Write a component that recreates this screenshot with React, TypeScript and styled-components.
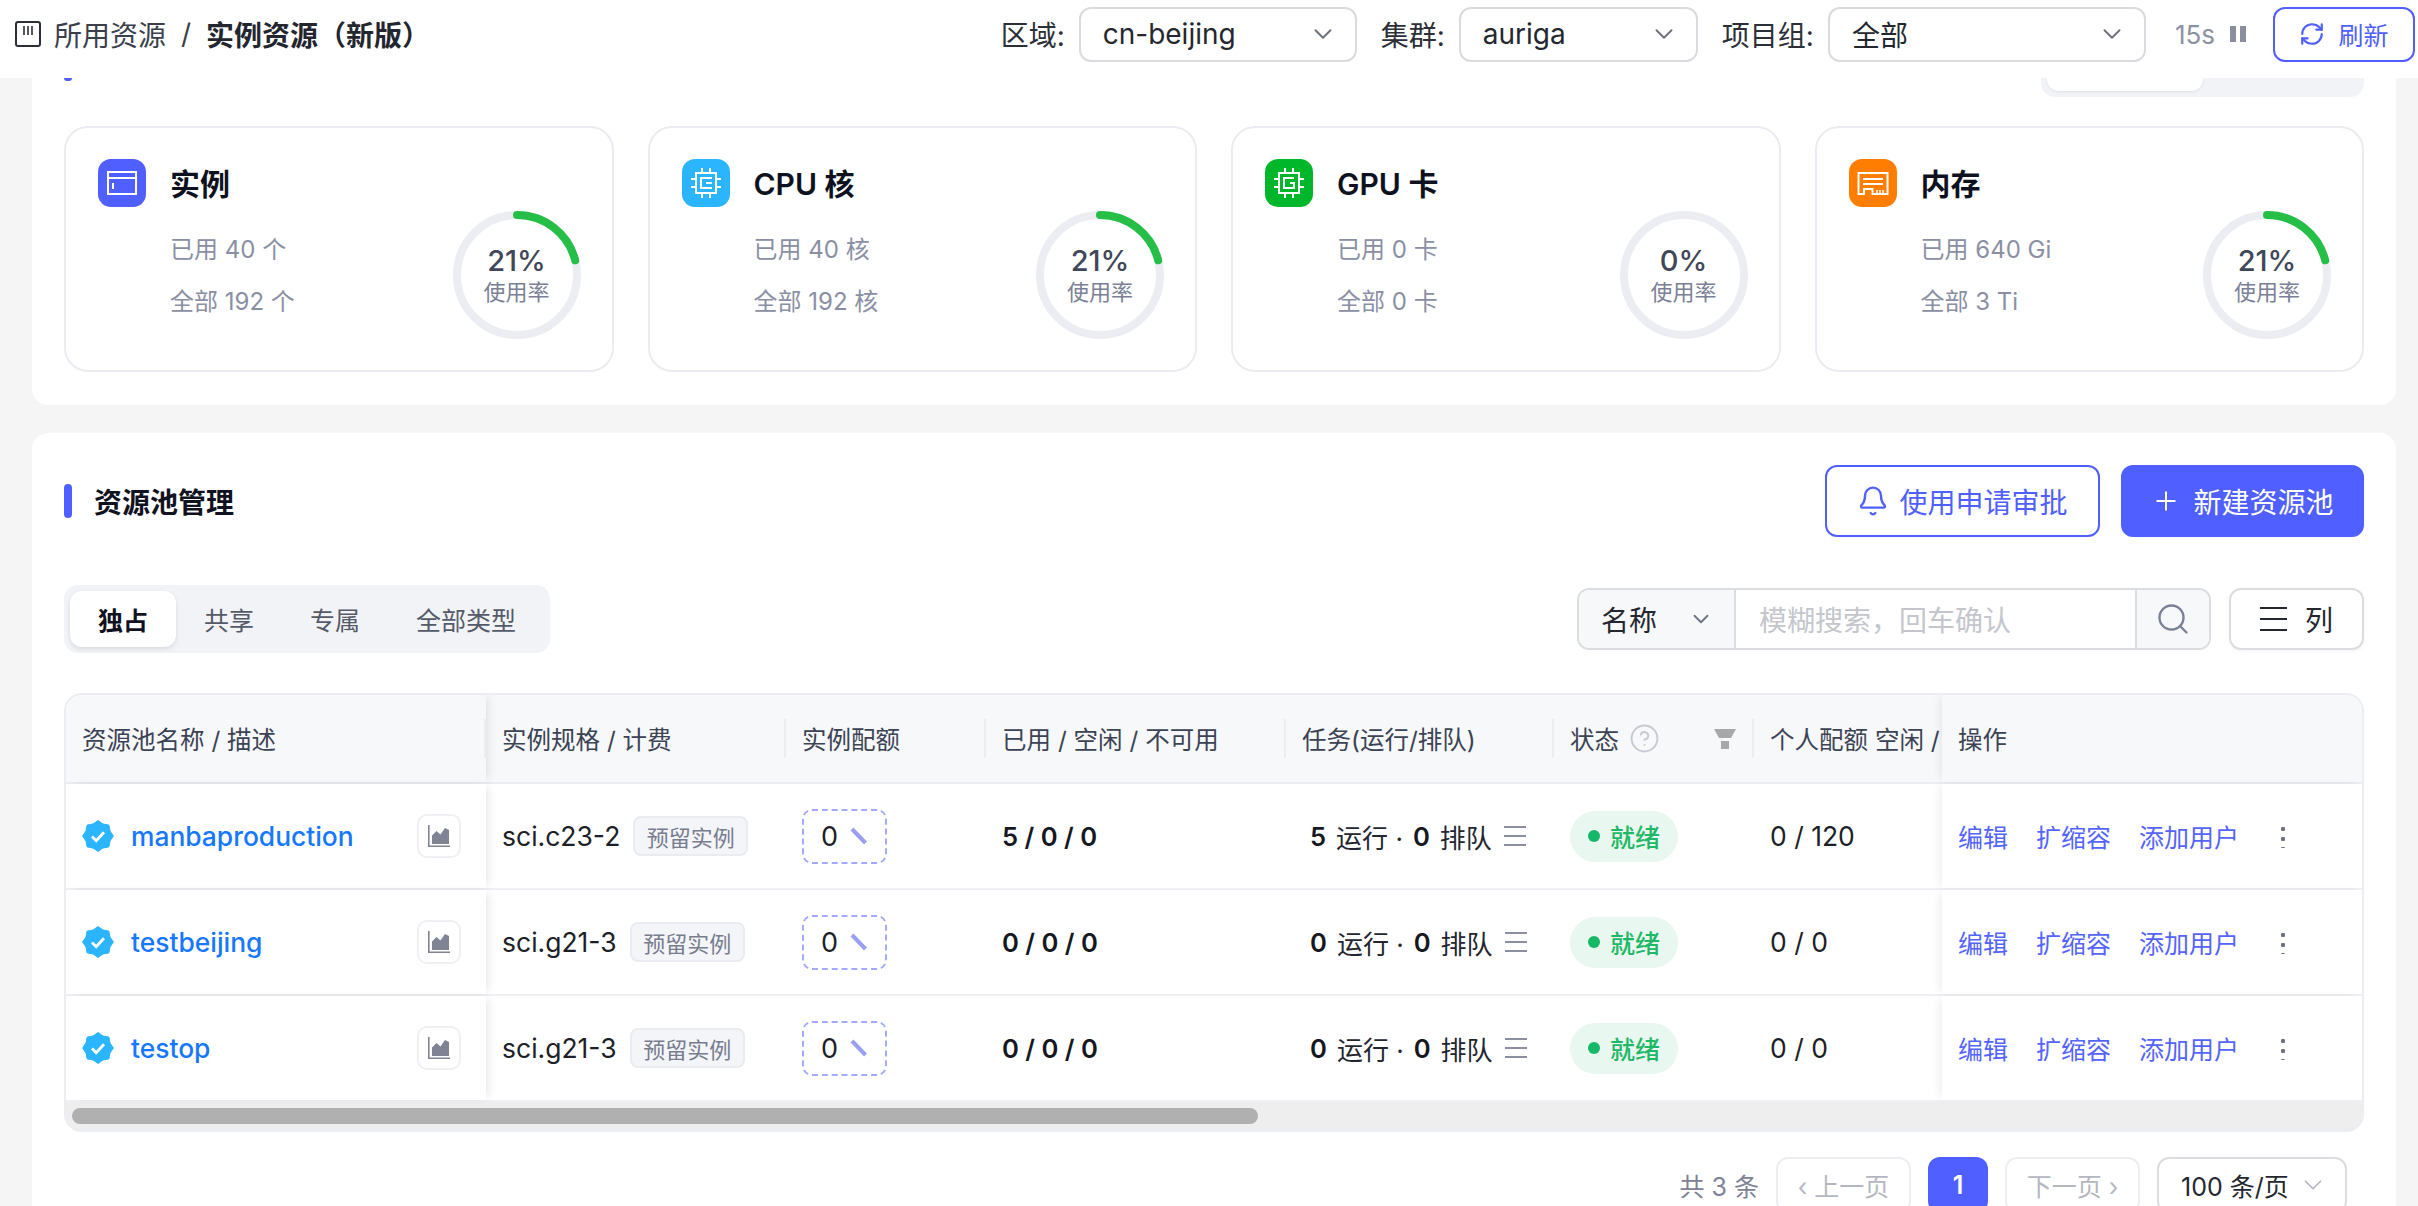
import React from 'react';
import styled, { createGlobalStyle } from 'styled-components';
import { Bell, ChevronDown, CircleHelp, Plus, RefreshCw, Search } from 'lucide-react';

const BLUE = '#505fff';
const FONT = 'Inter, "Noto Sans CJK SC", sans-serif';

const GlobalStyle = createGlobalStyle`
  html, body {
    margin: 0;
    padding: 0;
    height: 100%;
    overflow: hidden;
    background: #f5f5f5;
    font-family: ${FONT};
  }
  * { box-sizing: border-box; }
`;

const Shell = styled.div`
  height: 1206px;
  overflow: hidden;
  display: flex;
  flex-direction: column;
`;

const TopBar = styled.header`
  height: 78px;
  flex: none;
  display: flex;
  align-items: center;
  padding: 0 3px 10px 15px;
  background: #fff;
`;

const Crumbs = styled.div`
  display: flex;
  align-items: center;
  font-size: 28px;
  color: #3b3f4c;
`;

const CrumbText = styled.span`
  margin-left: 13px;
`;

const Slash = styled.span`
  margin: 0 15px;
`;

const CrumbCurrent = styled.span`
  font-weight: 600;
  color: #23262f;
`;

const Filters = styled.div`
  margin-left: auto;
  display: flex;
  align-items: center;
`;

const FilterLabel = styled.span`
  font-size: 28px;
  color: #2c2f38;
  margin-right: 14px;
`;

const SelectBox = styled.div<{ $width: number }>`
  width: ${(p) => p.$width}px;
  height: 55px;
  margin-right: 24px;
  padding: 0 17px 0 22px;
  display: flex;
  align-items: center;
  justify-content: space-between;
  border: 2px solid #dadbde;
  border-radius: 12px;
  font-size: 28px;
  color: #25272e;
  svg { color: #6e7383; }
`;

const Timer = styled.span`
  font-size: 26px;
  color: #8d92a3;
  margin-left: 5px;
`;

const PauseMark = styled.span`
  width: 16px;
  height: 16px;
  margin: 0 27px 0 15px;
  display: flex;
  justify-content: space-between;
  &::before, &::after {
    content: '';
    width: 6px;
    background: #8a8fa0;
  }
`;

const RefreshButton = styled.button`
  width: 142px;
  height: 55px;
  display: flex;
  align-items: center;
  justify-content: center;
  gap: 13px;
  background: #fff;
  border: 2px solid ${BLUE};
  border-radius: 12px;
  color: ${BLUE};
  font: 400 25px ${FONT};
  padding: 0;
`;

const Content = styled.main`
  flex: 1;
  padding: 0 22px 0 32px;
  display: flex;
  flex-direction: column;
  gap: 28px;
`;

const Panel = styled.section`
  background: #fff;
  padding: 0 32px 33px;
  border-radius: 0 0 16px 16px;
`;

const ToolPanel = styled(Panel)`
  padding-top: 32px;
  flex: 1;
  border-radius: 16px 16px 0 0;
`;

const ClippedHead = styled.div`
  height: 19px;
  margin-bottom: 29px;
  display: flex;
  justify-content: space-between;
  align-items: flex-start;
`;

const ClippedAccent = styled.span`
  width: 8px;
  height: 3px;
  background: ${BLUE};
  border-radius: 0 0 4px 4px;
`;

const ClippedSegment = styled.div`
  width: 323px;
  height: 19px;
  padding: 0 6px;
  background: #f2f3f7;
  border-radius: 0 0 14px 14px;
`;

const ClippedTab = styled.div`
  width: 156px;
  height: 13px;
  background: #fff;
  border-radius: 0 0 12px 12px;
  box-shadow: 0 1px 3px rgba(0, 0, 0, 0.08);
`;

const CardGrid = styled.div`
  display: grid;
  grid-template-columns: repeat(4, 1fr);
  gap: 34px;
`;

const Card = styled.article`
  height: 246px;
  padding: 31px 31px 31px 32px;
  border: 2px solid #ebecf2;
  border-radius: 24px;
  display: flex;
  justify-content: space-between;
`;

const CardTitleRow = styled.div`
  display: flex;
  align-items: center;
  gap: 24px;
`;

const IconTile = styled.span<{ $color: string }>`
  width: 48px;
  height: 48px;
  border-radius: 13px;
  background: ${(p) => p.$color};
  display: block;
  svg { display: block; }
`;

const CardTitle = styled.h3`
  margin: -2px 0 0;
  font-size: 30px;
  font-weight: 600;
  color: #0e1220;
`;

const Stats = styled.div`
  margin: 17px 0 0 72px;
  font-size: 24px;
  line-height: 52px;
  color: #8a8fa3;
  white-space: nowrap;
`;

const RingBox = styled.div`
  position: relative;
  width: 128px;
  height: 128px;
  align-self: flex-end;
  flex: none;
`;

const RingLabel = styled.div`
  position: absolute;
  inset: 0;
  display: flex;
  flex-direction: column;
  align-items: center;
  justify-content: center;
`;

const RingValue = styled.span`
  font-size: 29px;
  line-height: 34px;
  font-weight: 500;
  color: #3f4759;
`;

const RingCaption = styled.span`
  font-size: 22px;
  line-height: 28px;
  color: #7a8095;
`;

const SectionHead = styled.div`
  height: 72px;
  display: flex;
  align-items: center;
`;

const Accent = styled.span`
  width: 8px;
  height: 34px;
  margin-right: 22px;
  border-radius: 4px;
  background: ${BLUE};
`;

const SectionTitle = styled.h2`
  margin: 0;
  font-size: 28px;
  font-weight: 600;
  color: #10131f;
`;

const HeadActions = styled.div`
  margin-left: auto;
  display: flex;
  gap: 21px;
`;

const ActionButton = styled.button<{ $primary?: boolean }>`
  height: 72px;
  display: flex;
  align-items: center;
  justify-content: center;
  gap: ${(p) => (p.$primary ? 12 : 10)}px;
  padding: 0;
  width: ${(p) => (p.$primary ? 243 : 275)}px;
  border: 2px solid ${BLUE};
  border-radius: 12px;
  background: ${(p) => (p.$primary ? BLUE : '#fff')};
  color: ${(p) => (p.$primary ? '#fff' : BLUE)};
  font: 400 28px ${FONT};
`;

const Toolbar = styled.div`
  margin-top: 48px;
  display: flex;
  align-items: center;
  justify-content: space-between;
  height: 68px;
`;

const Segment = styled.div`
  height: 68px;
  padding: 6px;
  display: flex;
  background: #f2f3f7;
  border-radius: 14px;
`;

const SegmentTab = styled.span<{ $active?: boolean }>`
  height: 56px;
  padding: 0 28px;
  display: flex;
  align-items: center;
  font-size: 25px;
  border-radius: 12px;
  font-weight: ${(p) => (p.$active ? 600 : 400)};
  color: ${(p) => (p.$active ? '#10131f' : '#555a68')};
  background: ${(p) => (p.$active ? '#fff' : 'transparent')};
  box-shadow: ${(p) => (p.$active ? '0 2px 5px rgba(0, 0, 0, 0.1)' : 'none')};
`;

const ToolbarRight = styled.div`
  display: flex;
  gap: 18px;
`;

const SearchGroup = styled.div`
  width: 634px;
  height: 62px;
  display: flex;
  border: 2px solid #dcdde1;
  border-radius: 12px;
  overflow: hidden;
`;

const FieldPicker = styled.div`
  width: 157px;
  display: flex;
  align-items: center;
  justify-content: space-between;
  padding: 0 20px 0 22px;
  background: #f7f8fa;
  border-right: 2px solid #dcdde1;
  font-size: 28px;
  color: #25272e;
  svg { color: #6e7383; }
`;

const SearchInput = styled.div`
  flex: 1;
  padding-left: 23px;
  display: flex;
  align-items: center;
  font-size: 28px;
  color: #c4c6cc;
`;

const SearchAction = styled.div`
  width: 74px;
  display: flex;
  align-items: center;
  justify-content: center;
  background: #f7f8fa;
  border-left: 2px solid #dcdde1;
  color: #7a8095;
`;

const ColumnsButton = styled.button`
  width: 135px;
  height: 62px;
  display: flex;
  align-items: center;
  justify-content: center;
  gap: 18px;
  padding: 0;
  background: #fff;
  border: 2px solid #dcdde1;
  border-radius: 12px;
  box-shadow: 0 2px 4px rgba(0, 0, 0, 0.04);
  color: #25272e;
  font: 400 28px ${FONT};
`;

const LinesMark = styled.span<{ $width: number; $color: string; $gap: number }>`
  width: ${(p) => p.$width}px;
  height: ${(p) => p.$gap * 2 + 6}px;
  flex: none;
  display: block;
  background: repeating-linear-gradient(
    to bottom,
    ${(p) => p.$color} 0 2px,
    transparent 2px ${(p) => p.$gap + 2}px
  );
`;

const TableWrap = styled.div`
  margin-top: 40px;
  border: solid #ecedf2;
  border-width: 2px 2px 4px;
  border-radius: 18px;
  overflow: hidden;
`;

const rowColumns = '420px 300px 200px 300px 268px 200px 188px 1fr';

const HeadRow = styled.div`
  height: 89px;
  display: grid;
  grid-template-columns: ${rowColumns};
  background: #f7f8fa;
  border-bottom: 2px solid #ecedf2;
`;

const HeadCell = styled.div<{ $last?: boolean }>`
  position: relative;
  display: flex;
  align-items: center;
  padding-left: 16px;
  font-size: 24.5px;
  color: #3c4354;
  white-space: nowrap;
  overflow: hidden;
  background: #f7f8fa;
  &::after {
    content: '';
    display: ${(p) => (p.$last ? 'none' : 'block')};
    position: absolute;
    right: 0;
    top: 24px;
    width: 2px;
    height: 39px;
    background: #ecedf0;
  }
`;

const FilterMark = styled.svg`
  margin: 0 18px 0 auto;
  flex: none;
`;

const HelpMark = styled(CircleHelp)`
  margin-left: 10px;
  color: #c8cad2;
  flex: none;
`;

const PinnedLeftHead = styled(HeadCell)`
  z-index: 1;
  box-shadow: 5px 0 9px -3px rgba(0, 0, 0, 0.1);
`;

const PinnedRightHead = styled(HeadCell)`
  z-index: 1;
  box-shadow: -5px 0 9px -3px rgba(0, 0, 0, 0.08);
`;

const BodyRow = styled.div`
  height: 106px;
  display: grid;
  grid-template-columns: ${rowColumns};
  border-bottom: 2px solid #eff0f4;
  &:last-of-type { border-bottom-color: #e4e4e8; }
`;

const Cell = styled.div`
  display: flex;
  align-items: center;
  padding-left: 16px;
  font-size: 26.5px;
  color: #1d1f27;
  white-space: nowrap;
  overflow: hidden;
`;

const PinnedLeftCell = styled(Cell)`
  position: relative;
  z-index: 1;
  overflow: visible;
  padding-right: 25px;
  background: #fff;
  box-shadow: 5px 0 9px -3px rgba(0, 0, 0, 0.1);
`;

const PinnedRightCell = styled(Cell)`
  position: relative;
  z-index: 1;
  overflow: visible;
  background: #fff;
  box-shadow: -5px 0 9px -3px rgba(0, 0, 0, 0.08);
`;

const PoolName = styled.a`
  margin-left: 17px;
  font-size: 26.4px;
  font-weight: 500;
  color: #1677ff;
`;

const ChartButton = styled.span`
  margin-left: auto;
  width: 44px;
  height: 44px;
  flex: none;
  display: flex;
  align-items: center;
  justify-content: center;
  border: 2px solid #eef0f4;
  border-radius: 10px;
`;

const BillingTag = styled.span`
  margin-left: 13px;
  height: 40px;
  width: 115px;
  display: flex;
  align-items: center;
  justify-content: center;
  background: #f4f5f8;
  border: 2px solid #ebecf1;
  border-radius: 8px;
  font-size: 22px;
  color: #777c8e;
`;

const QuotaBox = styled.span`
  width: 85px;
  height: 55px;
  display: flex;
  align-items: center;
  justify-content: center;
  gap: 12px;
  border: 2px dashed #a4abff;
  border-radius: 10px;
  font-size: 27px;
`;

const Strong = styled.span`
  font-size: 25.6px;
  font-weight: 600;
  color: #16181f;
`;

const TaskText = styled.span`
  margin-left: 8px;
  display: flex;
  align-items: center;
  gap: 10px;
  font-size: 26px;
  color: #23262f;
  ${LinesMark} { margin-left: 2px; }
`;

const StatusTag = styled.span`
  width: 108px;
  height: 51px;
  padding-left: 18px;
  display: flex;
  align-items: center;
  gap: 10px;
  border-radius: 26px;
  background: #e8f7ef;
  color: #1fb866;
  font-size: 25px;
  font-weight: 500;
  &::before {
    content: '';
    width: 12px;
    height: 12px;
    border-radius: 50%;
    background: #14b866;
  }
`;

const ActionLink = styled.a`
  font-size: 25px;
  color: #5464ff;
  margin-right: 28px;
`;

const MoreDots = styled.span`
  margin-left: 14px;
  width: 4px;
  height: 24px;
  background: radial-gradient(circle, #6e7383 2px, transparent 2.4px) 0 0 / 4px 10px;
`;

const ScrollTrack = styled.div`
  height: 26px;
  padding: 6px 0 4px 6px;
  background: #eeeeee;
`;

const ScrollThumb = styled.div`
  width: 1186px;
  height: 16px;
  border-radius: 8px;
  background: #b0b0b0;
`;

const Pagination = styled.nav`
  margin-top: 25px;
  padding-right: 17px;
  display: flex;
  justify-content: flex-end;
  align-items: center;
  gap: 17px;
  font-size: 25px;
`;

const Total = styled.span`
  color: #7d8296;
`;

const PageButton = styled.span`
  width: 135px;
  height: 56px;
  display: flex;
  align-items: center;
  justify-content: center;
  gap: 8px;
  border: 2px solid #eceef2;
  border-radius: 12px;
  color: #b5b7c0;
`;

const CurrentPage = styled.span`
  width: 60px;
  height: 56px;
  display: flex;
  align-items: center;
  justify-content: center;
  border-radius: 12px;
  background: ${BLUE};
  color: #fff;
  font-weight: 600;
`;

const PageSize = styled.span`
  width: 190px;
  height: 56px;
  padding: 0 17px 0 22px;
  display: flex;
  align-items: center;
  justify-content: space-between;
  border: 2px solid #dcdde1;
  border-radius: 12px;
  color: #25272e;
  svg { color: #b5b7c0; }
`;

const SidebarGlyph = () => (
  <svg width="26" height="26" viewBox="0 0 26 26" fill="none" stroke="#2c2f38" strokeWidth="2">
    <rect x="1" y="1" width="24" height="24" rx="2" />
    <path d="M9 5v9M13 5v9M17 5v9" strokeWidth="1.6" />
  </svg>
);

const WindowGlyph = () => (
  <svg width="48" height="48" viewBox="0 0 48 48" fill="none" stroke="#fff" strokeWidth="2">
    <rect x="10" y="13" width="28" height="22" />
    <path d="M10 19h28" />
    <path d="M15 24v6" />
  </svg>
);

const ChipGlyph = ({ inner }: { inner: string }) => (
  <svg width="48" height="48" viewBox="0 0 48 48" fill="none" stroke="#fff" strokeWidth="2">
    <rect x="14" y="14" width="20" height="20" />
    <path d="M20 9v5M28 9v5M20 34v5M28 34v5M9 20h5M9 28h5M34 20h5M34 28h5" />
    <path d={inner} />
  </svg>
);

const MemoryGlyph = () => (
  <svg width="48" height="48" viewBox="0 0 48 48" fill="none" stroke="#fff" strokeWidth="2">
    <path d="M9.5 14h29v21h-15v-5h-8.5v5h-5.5z" />
    <path d="M14 20h20M14 25h20" />
    <path d="M28 31v3M31 31v3M34 31v3" strokeWidth="1.5" />
  </svg>
);

const starPoints = (() => {
  const points: string[] = [];
  for (let i = 0; i < 16; i += 1) {
    const angle = (Math.PI * i) / 8 - Math.PI / 2;
    const radius = i % 2 === 0 ? 15.4 : 13;
    points.push(`${16 + radius * Math.cos(angle)},${16 + radius * Math.sin(angle)}`);
  }
  return points.join(' ');
})();

const VerifiedBadge = () => (
  <svg width="32" height="32" viewBox="0 0 32 32" style={{ flex: 'none' }}>
    <polygon points={starPoints} fill="#2bb5ff" stroke="#2bb5ff" strokeWidth="1" strokeLinejoin="round" />
    <path d="M10 16.5l4.2 4.2 7.8-8.5" fill="none" stroke="#fff" strokeWidth="2.8" />
  </svg>
);

const AreaGlyph = () => (
  <svg width="22" height="22" viewBox="0 0 22 22" fill="#7f8394">
    <path d="M0 0h1.6v20.4H22V22H0z" />
    <path d="M4 19V10.5L8.5 6l4 3.5L17 3l4 2v14z" />
  </svg>
);

const PencilGlyph = () => (
  <svg width="18" height="18" viewBox="0 0 18 18" fill="none" stroke="#9a9ff5" style={{ flex: 'none' }}>
    <path d="M2 2l13.5 14" strokeWidth="4" />
  </svg>
);

const Ring = ({ percent }: { percent: number }) => {
  const length = 2 * Math.PI * 60;
  return (
    <svg width="128" height="128" viewBox="0 0 128 128" fill="none">
      <circle cx="64" cy="64" r="60" stroke="#ecedf3" strokeWidth="8" />
      {percent > 0 && (
        <circle
          cx="64"
          cy="64"
          r="60"
          stroke="#25bf47"
          strokeWidth="8"
          strokeLinecap="round"
          strokeDasharray={`${(length * percent) / 100} ${length}`}
          transform="rotate(-90 64 64)"
        />
      )}
    </svg>
  );
};

const cards = [
  { title: '实例', color: '#505fff', icon: <WindowGlyph />, used: '已用 40 个', total: '全部 192 个', percent: 21 },
  { title: 'CPU 核', color: '#2bb5ff', icon: <ChipGlyph inner="M30 19H19v10h11M30 24h-6" />, used: '已用 40 核', total: '全部 192 核', percent: 21 },
  { title: 'GPU 卡', color: '#00b72b', icon: <ChipGlyph inner="M29 19H19v10h10v-5h-4" />, used: '已用 0 卡', total: '全部 0 卡', percent: 0 },
  { title: '内存', color: '#ff7d00', icon: <MemoryGlyph />, used: '已用 640 Gi', total: '全部 3 Ti', percent: 21 },
];

const rows = [
  { name: 'manbaproduction', spec: 'sci.c23-2', counts: '5 / 0 / 0', running: 5, personal: '0 / 120' },
  { name: 'testbeijing', spec: 'sci.g21-3', counts: '0 / 0 / 0', running: 0, personal: '0 / 0' },
  { name: 'testop', spec: 'sci.g21-3', counts: '0 / 0 / 0', running: 0, personal: '0 / 0' },
];

const App = () => {
  return (
    <Shell>
      <GlobalStyle />
      <TopBar>
        <Crumbs>
          <SidebarGlyph />
          <CrumbText>所用资源</CrumbText>
          <Slash>/</Slash>
          <CrumbCurrent>实例资源（新版）</CrumbCurrent>
        </Crumbs>
        <Filters>
          <FilterLabel>区域:</FilterLabel>
          <SelectBox $width={278}>cn-beijing<ChevronDown size={30} strokeWidth={1.6} /></SelectBox>
          <FilterLabel>集群:</FilterLabel>
          <SelectBox $width={239}>auriga<ChevronDown size={30} strokeWidth={1.6} /></SelectBox>
          <FilterLabel>项目组:</FilterLabel>
          <SelectBox $width={318}>全部<ChevronDown size={30} strokeWidth={1.6} /></SelectBox>
          <Timer>15s</Timer>
          <PauseMark />
          <RefreshButton><RefreshCw size={26} strokeWidth={2} />刷新</RefreshButton>
        </Filters>
      </TopBar>
      <Content>
        <Panel>
          <ClippedHead>
            <ClippedAccent />
            <ClippedSegment><ClippedTab /></ClippedSegment>
          </ClippedHead>
          <CardGrid>
            {cards.map((card) => (
              <Card key={card.title}>
                <div>
                  <CardTitleRow>
                    <IconTile $color={card.color}>{card.icon}</IconTile>
                    <CardTitle>{card.title}</CardTitle>
                  </CardTitleRow>
                  <Stats>
                    <div>{card.used}</div>
                    <div>{card.total}</div>
                  </Stats>
                </div>
                <RingBox>
                  <Ring percent={card.percent} />
                  <RingLabel>
                    <RingValue>{card.percent}%</RingValue>
                    <RingCaption>使用率</RingCaption>
                  </RingLabel>
                </RingBox>
              </Card>
            ))}
          </CardGrid>
        </Panel>
        <ToolPanel>
          <SectionHead>
            <Accent />
            <SectionTitle>资源池管理</SectionTitle>
            <HeadActions>
              <ActionButton><Bell size={32} strokeWidth={1.8} />使用申请审批</ActionButton>
              <ActionButton $primary><Plus size={30} strokeWidth={1.6} />新建资源池</ActionButton>
            </HeadActions>
          </SectionHead>
          <Toolbar>
            <Segment>
              <SegmentTab $active>独占</SegmentTab>
              <SegmentTab>共享</SegmentTab>
              <SegmentTab>专属</SegmentTab>
              <SegmentTab>全部类型</SegmentTab>
            </Segment>
            <ToolbarRight>
              <SearchGroup>
                <FieldPicker>名称<ChevronDown size={26} strokeWidth={1.7} /></FieldPicker>
                <SearchInput>模糊搜索，回车确认</SearchInput>
                <SearchAction><Search size={36} strokeWidth={1.6} /></SearchAction>
              </SearchGroup>
              <ColumnsButton><LinesMark $width={27} $color="#25272e" $gap={9} />列</ColumnsButton>
            </ToolbarRight>
          </Toolbar>
          <TableWrap>
            <HeadRow>
              <PinnedLeftHead>资源池名称 / 描述</PinnedLeftHead>
              <HeadCell>实例规格 / 计费</HeadCell>
              <HeadCell>实例配额</HeadCell>
              <HeadCell>已用 / 空闲 / 不可用</HeadCell>
              <HeadCell>任务(运行/排队)</HeadCell>
              <HeadCell>
                状态
                <HelpMark size={31} strokeWidth={1.5} />
                <FilterMark width="22" height="20" viewBox="0 0 22 20" fill="#a8a8a8">
                  <path d="M0 0h22l-5 9H5z" />
                  <path d="M7 12h8v8H7z" />
                </FilterMark>
              </HeadCell>
              <HeadCell $last>个人配额 空闲 /</HeadCell>
              <PinnedRightHead $last>操作</PinnedRightHead>
            </HeadRow>
            {rows.map((row) => (
              <BodyRow key={row.name}>
                <PinnedLeftCell>
                  <VerifiedBadge />
                  <PoolName>{row.name}</PoolName>
                  <ChartButton><AreaGlyph /></ChartButton>
                </PinnedLeftCell>
                <Cell>
                  {row.spec}
                  <BillingTag>预留实例</BillingTag>
                </Cell>
                <Cell><QuotaBox>0<PencilGlyph /></QuotaBox></Cell>
                <Cell><Strong>{row.counts}</Strong></Cell>
                <Cell>
                  <TaskText>
                    <Strong>{row.running}</Strong>运行 · <Strong>0</Strong>排队
                    <LinesMark $width={22} $color="#8b8fa1" $gap={7} />
                  </TaskText>
                </Cell>
                <Cell><StatusTag>就绪</StatusTag></Cell>
                <Cell>{row.personal}</Cell>
                <PinnedRightCell>
                  <ActionLink>编辑</ActionLink>
                  <ActionLink>扩缩容</ActionLink>
                  <ActionLink>添加用户</ActionLink>
                  <MoreDots />
                </PinnedRightCell>
              </BodyRow>
            ))}
            <ScrollTrack><ScrollThumb /></ScrollTrack>
          </TableWrap>
          <Pagination>
            <Total>共 3 条</Total>
            <PageButton>‹ 上一页</PageButton>
            <CurrentPage>1</CurrentPage>
            <PageButton>下一页 ›</PageButton>
            <PageSize>100 条/页<ChevronDown size={30} strokeWidth={1.4} /></PageSize>
          </Pagination>
        </ToolPanel>
      </Content>
    </Shell>
  );
};

export default App;
